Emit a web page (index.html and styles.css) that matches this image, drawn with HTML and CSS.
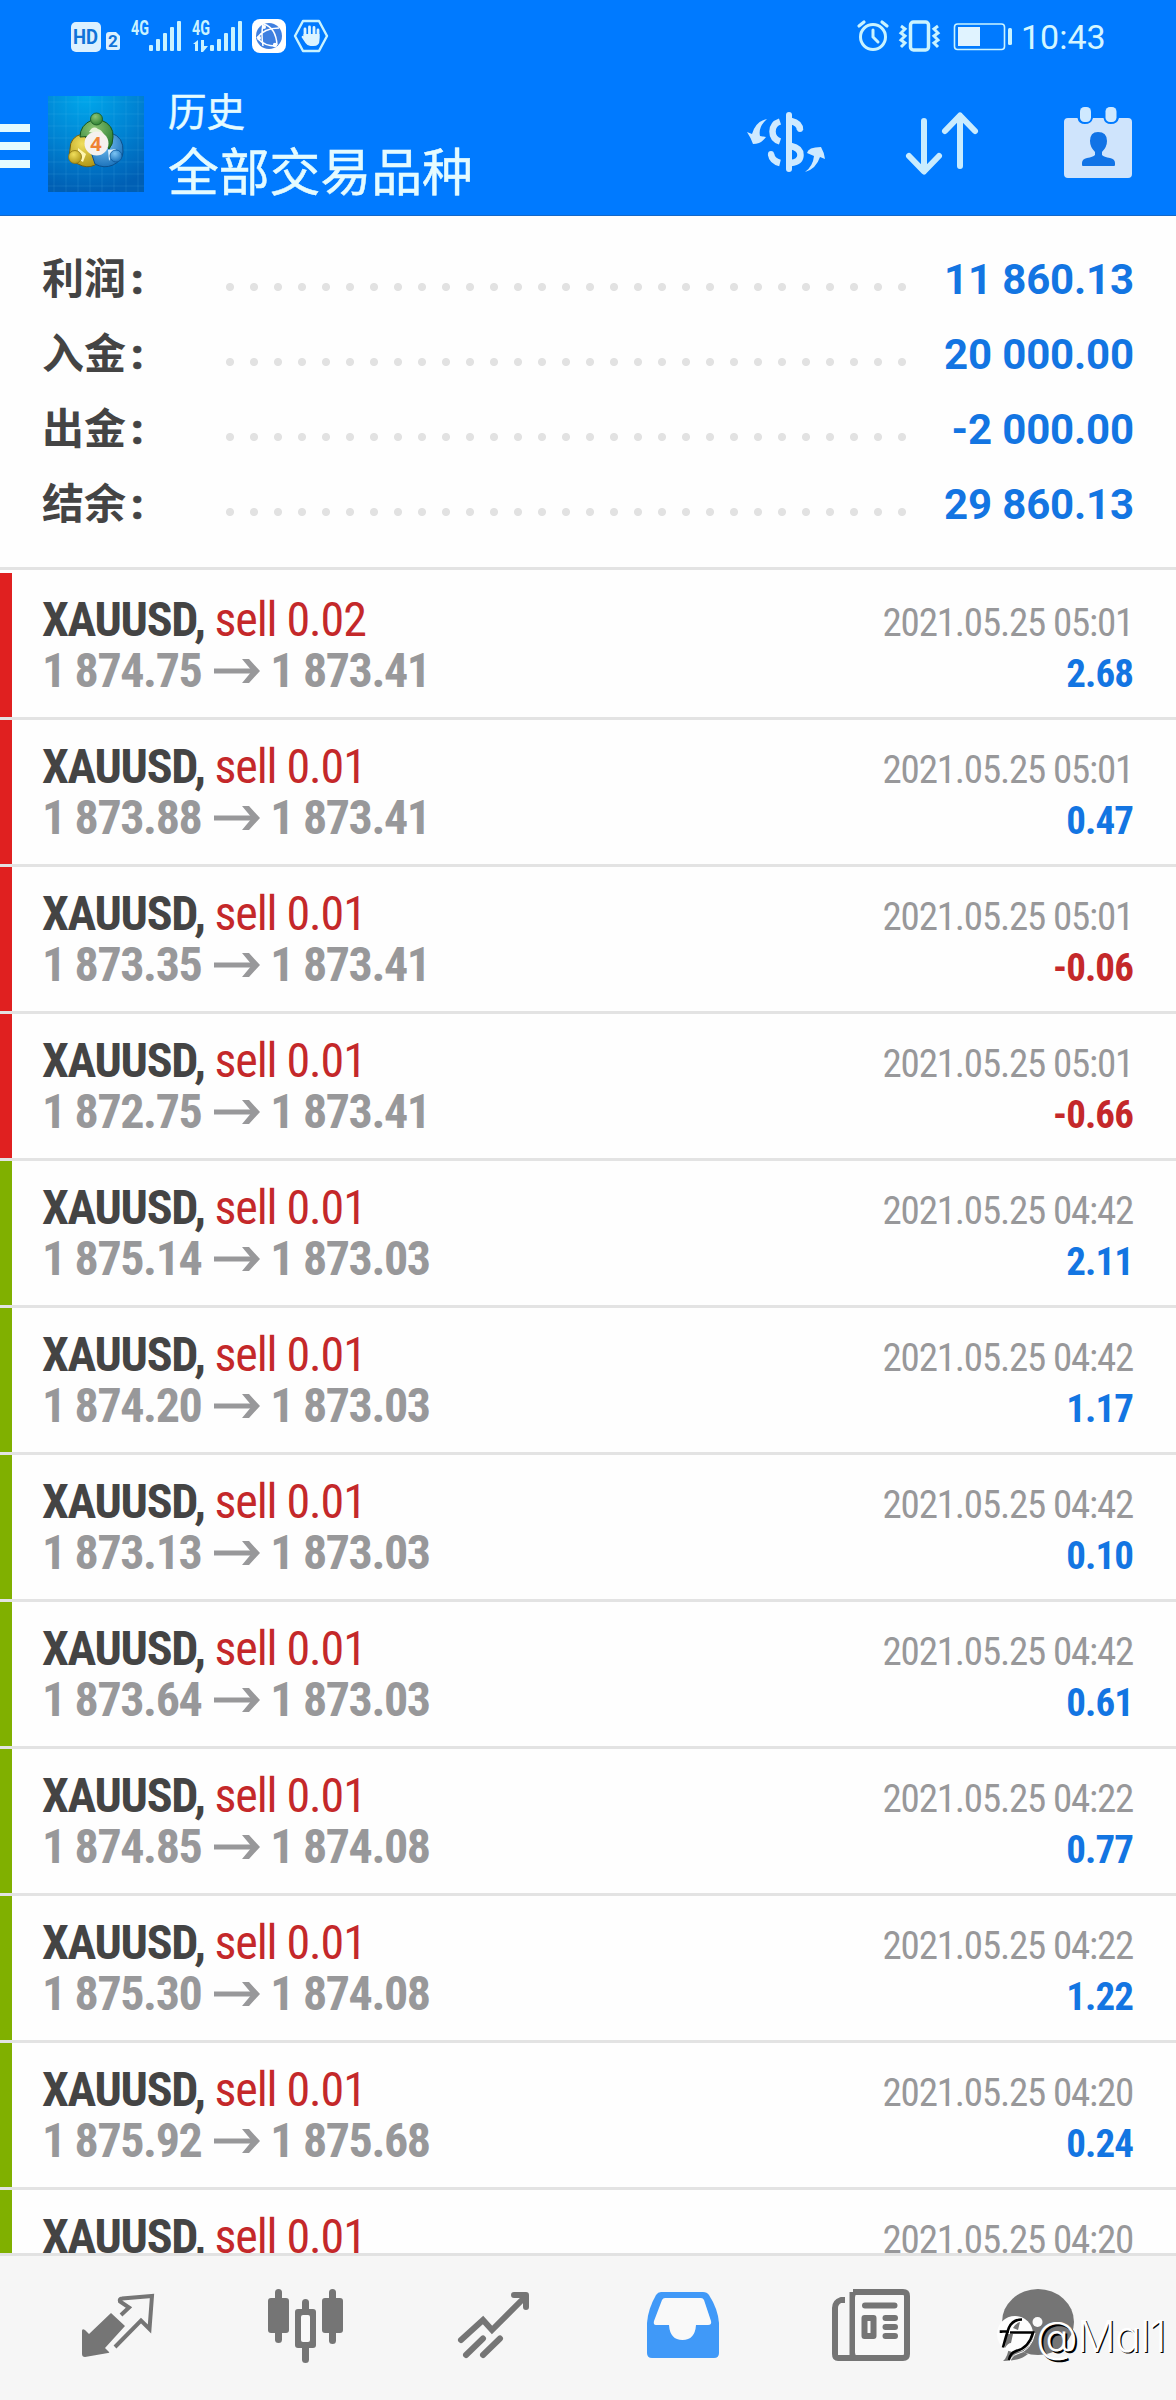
FILE: index.html
```html
<!DOCTYPE html>
<html lang="zh-CN">
<head>
<meta charset="utf-8">
<title>历史</title>
<link rel="stylesheet" href="styles.css">
</head>
<body>
<svg class="defs" width="0" height="0" aria-hidden="true">
  <symbol id="arrow" viewBox="0 0 46 26">
    <path d="M0 13H41" fill="none" stroke="currentColor" stroke-width="5"/>
    <path d="M28 1h7l11 12-11 12h-7l10-12z" fill="currentColor"/>
  </symbol>
</svg>

<header class="top">
  <div class="status">
    <svg width="280" height="72" viewBox="60 0 280 72">
      <rect x="71" y="22" width="30" height="30" rx="5" fill="#dcf1ff"/>
      <text x="73" y="44" class="hd" textLength="25" lengthAdjust="spacingAndGlyphs">HD</text>
      <path d="M109 32h7l4 4v12q0 2-2 2h-10q-2 0-2-2V35q0-3 3-3z" fill="#dcf1ff"/>
      <text x="108" y="47" class="sim">2</text>
      <g fill="#c9f3ff">
        <text x="131" y="35" class="gen" textLength="18" lengthAdjust="spacingAndGlyphs">4G</text>
        <rect x="149" y="45" width="4" height="6" rx="1"/><rect x="156" y="39" width="4" height="12" rx="1"/><rect x="163" y="33" width="4" height="18" rx="1"/><rect x="170" y="27" width="4" height="24" rx="1"/><rect x="177" y="21" width="4" height="30" rx="1"/>
        <text x="192" y="35" class="gen" textLength="18" lengthAdjust="spacingAndGlyphs">4G</text>
        <path d="M193 44l5-4v11h-3v-7zM201 40h3v6h4l-5 6h-2z"/>
        <rect x="210" y="45" width="4" height="6" rx="1"/><rect x="217" y="39" width="4" height="12" rx="1"/><rect x="224" y="33" width="4" height="18" rx="1"/><rect x="231" y="27" width="4" height="24" rx="1"/><rect x="238" y="21" width="4" height="30" rx="1"/>
      </g>
      <rect x="252" y="19" width="34" height="34" rx="8" fill="#fff"/>
      <circle cx="269" cy="36" r="13" fill="#3f7fe0"/>
      <path d="M264 24q12 4 13 21M257 38q7-10 22-10M258 39q7 7 17 7M263 24q-2 10 0 22" fill="none" stroke="#fff" stroke-width="1.5"/>
      <circle cx="264" cy="27" r="2" fill="#fff"/><circle cx="259" cy="38" r="2" fill="#fff"/><circle cx="275" cy="45" r="2.2" fill="#fff"/>
      <path d="M303 21h16l8 15-8 15h-16l-8-15z" fill="none" stroke="#c9f3ff" stroke-width="2.4" stroke-linejoin="round"/>
      <path d="M305 37V29M309.500 36V27M314 36V27.500M318 38V30" stroke="#dcf4ff" stroke-width="2.800" stroke-linecap="round"/>
      <path d="M303.500 34h16v6q0 6-6 6h-3q-3 0-5-3l-4-6q1-2 2-.5z" fill="#dcf4ff"/>
    </svg>
    <div class="status-right">
      <svg width="160" height="72" viewBox="855 0 160 72" fill="none" stroke="#c9f3ff">
        <circle cx="873" cy="37" r="12.500" stroke-width="3"/>
        <path d="M873 30v7l5 5" stroke-width="3" stroke-linecap="round"/>
        <path d="M859 26l5-4M887 26l-5-4" stroke-width="3.200" stroke-linecap="round"/>
        <rect x="910.500" y="22" width="18" height="28" rx="3" stroke-width="3.500"/>
        <path d="M901 26l4 3-4 4 4 3-4 4 4 3-4 4M938 26l-4 3 4 4-4 3 4 4-4 3 4 4" stroke-width="3"/>
        <rect x="954.500" y="24" width="50" height="25.500" rx="3" stroke-width="1.600"/>
        <rect x="958" y="27" width="22" height="19" fill="#e0f3ff" stroke="none"/>
        <rect x="1008" y="28" width="4" height="17" rx="1.500" fill="#c9f3ff" stroke="none"/>
      </svg>
      <span class="clock">10:43</span>
    </div>
  </div>
  <div class="bar">
    <div class="burger"><i></i><i></i><i></i></div>
    <svg class="logo" width="96" height="96" viewBox="48 96 96 96">
      <defs>
        <radialGradient id="bg" cx=".4" cy="0" r="1"><stop offset="0" stop-color="#00a8ec"/><stop offset=".55" stop-color="#0082d2"/><stop offset="1" stop-color="#005fb4"/></radialGradient>
        <radialGradient id="g" cx=".4" cy=".3" r=".8"><stop offset="0" stop-color="#8cc474"/><stop offset="1" stop-color="#237a2c"/></radialGradient>
        <radialGradient id="y" cx=".4" cy=".3" r=".8"><stop offset="0" stop-color="#f0de5c"/><stop offset="1" stop-color="#a98f10"/></radialGradient>
        <radialGradient id="b" cx=".4" cy=".3" r=".8"><stop offset="0" stop-color="#7cc4f4"/><stop offset="1" stop-color="#0f68b4"/></radialGradient>
        <pattern id="grid" x="48" y="96" width="12" height="12" patternUnits="userSpaceOnUse"><path d="M6 0V12M0 6H12" stroke="#5cc8f5" stroke-opacity=".14" stroke-width="1"/></pattern>
      </defs>
      <path fill="url(#bg)" d="M48 96h96v96H48z"/>
      <path fill="url(#grid)" d="M48 96h96v96H48z"/>
      <path d="M82 134q-12 3-12 15-3 10 8 15 9 5 17 1 6-4 6-12z" fill="url(#y)" stroke="#715f11"/>
      <path d="M111 133q13 4 12 19 0 8-10 13-9 4-18-1l-4-12z" fill="url(#b)" stroke="#0b508d"/>
      <path d="M80 137q0-12 12-17h9q13 5 12 17 0 8-4 12l-12-13z" fill="url(#g)" stroke="#17551f"/>
      <path d="M89 132q4-7 9-3 4 1 6 6z" fill="#e8f4d8"/>
      <circle cx="96.500" cy="119" r="6" fill="url(#g)" stroke="#17551f" stroke-width=".8"/>
      <path d="M78 148l8 6-3 8-5-3z" fill="#fff6b0"/>
      <circle cx="75" cy="157" r="6.500" fill="url(#y)" stroke="#8a7412" stroke-width=".8"/>
      <path d="M108 150l8-1-7 12z" fill="#d8efff"/>
      <circle cx="116" cy="156" r="6" fill="url(#b)" stroke="#0d5799" stroke-width=".8"/>
      <circle cx="96.500" cy="143.500" r="12" fill="#f5f1ee"/>
      <text x="96" y="151" class="four">4</text>
    </svg>
    <div class="titles">
      <div class="t1">历史</div>
      <div class="t2">全部交易品种</div>
    </div>
    <div class="actions">
      <svg width="156" height="100" viewBox="709 94 156 100" fill="#cfeaff">
        <g fill="none" stroke="#cfeaff" stroke-width="6">
          <path d="M789 115v54" stroke-linecap="round"/>
          <path d="M780 121.500q-7.500 2.500-7.500 10t7.500 10" stroke-width="6.500"/>
          <path d="M771 154q1 7 9 9" stroke-width="6.500"/>
          <path d="M791 121q9 2 9 9M791 146q9.500 2 9.500 9t-9.500 8" stroke-width="6.500"/>
          <path d="M771 154v.1M800 129v.1" stroke-linecap="round"/>
        </g>
        <path d="M767 119q-9 8-7 17l6 1q-5 7-13 7-2-6-6-12l5 2q4-13 15-15z"/>
        <path d="M805 172q8-6 9-16l-7-3q1-6 14-6 3 5 4 12l-5-2q-4 12-15 15z"/>
      </svg>
      <svg width="156" height="100" viewBox="865 94 156 100" fill="none" stroke="#c9ecff" stroke-width="6" stroke-linecap="round" stroke-linejoin="round">
        <path d="M924 121v50M909 156l15 15.500 15-15.500M960 166v-50M945 131l15-15.500 15 15.500"/>
      </svg>
      <svg width="155" height="100" viewBox="1021 94 155 100">
        <path d="M1068 118h9.500q1 6 7.500 6t8-6h10.500q1 6 7.500 6t8-6h9q4 0 4 4v52q0 4-4 4h-60q-4 0-4-4v-52q0-4 4-4z" fill="#cfe4fc"/>
        <rect x="1080" y="107" width="11" height="15" rx="4.500" fill="#cfe9ff"/>
        <rect x="1105.500" y="107" width="11" height="15" rx="4.500" fill="#cfe9ff"/>
        <path d="M1098 132q9 0 9 9 0 6-5 11v3q2 2 8 3 5 1 5 5v2q0 1-1 1h-31q-1 0-1-1v-2q0-4 5-5 6-1 8-3v-3q-5-5-5-11 0-9 8-9z" fill="#1173e6"/>
      </svg>
    </div>
  </div>
</header>

<section class="summary">
  <div class="sum"><span class="label">利润<b>:</b></span><span class="dots"></span><span class="val">11 860.13</span></div>
  <div class="sum"><span class="label">入金<b>:</b></span><span class="dots"></span><span class="val">20 000.00</span></div>
  <div class="sum"><span class="label">出金<b>:</b></span><span class="dots"></span><span class="val">-2 000.00</span></div>
  <div class="sum"><span class="label">结余<b>:</b></span><span class="dots"></span><span class="val">29 860.13</span></div>
</section>

<main class="list">
  <div class="row red"><div class="left"><div><b>XAUUSD,</b> <span class="sell">sell 0.02</span></div><div class="price">1 874.75<svg><use href="#arrow"/></svg>1 873.41</div></div><div class="right"><div class="date">2021.05.25 05:01</div><div class="pl">2.68</div></div></div>
  <div class="row red"><div class="left"><div><b>XAUUSD,</b> <span class="sell">sell 0.01</span></div><div class="price">1 873.88<svg><use href="#arrow"/></svg>1 873.41</div></div><div class="right"><div class="date">2021.05.25 05:01</div><div class="pl">0.47</div></div></div>
  <div class="row red"><div class="left"><div><b>XAUUSD,</b> <span class="sell">sell 0.01</span></div><div class="price">1 873.35<svg><use href="#arrow"/></svg>1 873.41</div></div><div class="right"><div class="date">2021.05.25 05:01</div><div class="pl loss">-0.06</div></div></div>
  <div class="row red"><div class="left"><div><b>XAUUSD,</b> <span class="sell">sell 0.01</span></div><div class="price">1 872.75<svg><use href="#arrow"/></svg>1 873.41</div></div><div class="right"><div class="date">2021.05.25 05:01</div><div class="pl loss">-0.66</div></div></div>
  <div class="row"><div class="left"><div><b>XAUUSD,</b> <span class="sell">sell 0.01</span></div><div class="price">1 875.14<svg><use href="#arrow"/></svg>1 873.03</div></div><div class="right"><div class="date">2021.05.25 04:42</div><div class="pl">2.11</div></div></div>
  <div class="row"><div class="left"><div><b>XAUUSD,</b> <span class="sell">sell 0.01</span></div><div class="price">1 874.20<svg><use href="#arrow"/></svg>1 873.03</div></div><div class="right"><div class="date">2021.05.25 04:42</div><div class="pl">1.17</div></div></div>
  <div class="row"><div class="left"><div><b>XAUUSD,</b> <span class="sell">sell 0.01</span></div><div class="price">1 873.13<svg><use href="#arrow"/></svg>1 873.03</div></div><div class="right"><div class="date">2021.05.25 04:42</div><div class="pl">0.10</div></div></div>
  <div class="row"><div class="left"><div><b>XAUUSD,</b> <span class="sell">sell 0.01</span></div><div class="price">1 873.64<svg><use href="#arrow"/></svg>1 873.03</div></div><div class="right"><div class="date">2021.05.25 04:42</div><div class="pl">0.61</div></div></div>
  <div class="row"><div class="left"><div><b>XAUUSD,</b> <span class="sell">sell 0.01</span></div><div class="price">1 874.85<svg><use href="#arrow"/></svg>1 874.08</div></div><div class="right"><div class="date">2021.05.25 04:22</div><div class="pl">0.77</div></div></div>
  <div class="row"><div class="left"><div><b>XAUUSD,</b> <span class="sell">sell 0.01</span></div><div class="price">1 875.30<svg><use href="#arrow"/></svg>1 874.08</div></div><div class="right"><div class="date">2021.05.25 04:22</div><div class="pl">1.22</div></div></div>
  <div class="row"><div class="left"><div><b>XAUUSD,</b> <span class="sell">sell 0.01</span></div><div class="price">1 875.92<svg><use href="#arrow"/></svg>1 875.68</div></div><div class="right"><div class="date">2021.05.25 04:20</div><div class="pl">0.24</div></div></div>
  <div class="row last"><div class="left"><div><b>XAUUSD,</b> <span class="sell">sell 0.01</span></div></div><div class="right"><div class="date">2021.05.25 04:20</div></div></div>
</main>

<nav class="nav">
  <svg viewBox="24 2256 188 144" fill="#757575">
    <path d="M111 2313l14 13-20 22 4 4q1 1-1 1l-23 4q-3 0-3-3v-23q0-3 3-1l4 4z"/>
    <path d="M121 2315l8-7.500-9-6q-1-3 2-3l30-2.500-2.500 33-8.500-8.500-26 26.500" fill="none" stroke="#757575" stroke-width="4"/>
  </svg>
  <svg viewBox="212 2256 188 144" fill="#757575">
    <rect x="268" y="2298" width="21" height="35" rx="3"/><rect x="275" y="2289" width="7" height="54" rx="3.500"/>
    <rect x="322" y="2298" width="21" height="35" rx="3"/><rect x="329" y="2289" width="7" height="55" rx="3.500"/>
    <rect x="302" y="2299" width="7" height="64" rx="3.500"/><rect x="295" y="2309" width="21" height="39" rx="3"/>
    <rect x="301" y="2315" width="9" height="27" rx="2" fill="#f9f9f9"/>
  </svg>
  <svg viewBox="400 2256 188 144" fill="none" stroke="#757575" stroke-width="6" stroke-linecap="round">
    <path d="M461 2340l22-20 9 10 33-33M466 2355l17-16.500M483 2355l17-16.500"/>
    <path d="M514 2295h12v12" stroke-linejoin="round"/>
  </svg>
  <svg viewBox="588 2256 188 144">
    <path fill="#4099f8" d="M661 2292h42q4 0 6 3 9 14 10 28v30q0 5-5 5h-62q-5 0-5-5v-30q1-14 9-28 2-3 5-3z"/>
    <path fill="#f9f9f9" d="M665 2298q-2 0-3 2l-8 21q-1 4 2 4h13q1 15 13.500 15t13.500-15h12q4 0 3-4l-7-21q-1-2-3-2z"/>
  </svg>
  <svg viewBox="776 2256 188 144" fill="none" stroke="#757575">
    <path d="M853 2292h50q4 0 4 4v58q0 4-4 4h-65q-3 0-3-4v-46q0-6 6-8h4M852.500 2292v65" stroke-width="6" stroke-linejoin="round"/>
    <rect x="855" y="2295" width="48.500" height="60" rx="3" fill="#f9f9f9" stroke="none"/>
    <path d="M865 2305.500h29.500M885.500 2318h9.500M885.500 2327h9.500M885.500 2336h9.500" stroke-width="6" stroke-linecap="round"/>
    <rect x="864.500" y="2318" width="9" height="18" stroke-width="6" stroke-linejoin="round"/>
  </svg>
  <svg viewBox="964 2256 188 144">
    <ellipse cx="1038" cy="2322" rx="36" ry="33" fill="#757575"/>
    <path d="M1003 2361q5-4 6-15l19 8q-8 7-25 7z" fill="#757575"/>
    <circle cx="1037.500" cy="2322" r="5" fill="#f9f9f9"/>
    <ellipse cx="1015" cy="2334" rx="18" ry="18" fill="#fdfdfd"/>
    <path d="M1006 2334h7l-2 9q-3 0-6 5zM1013 2328q3-5 7-6l-2 8z" fill="#757575"/>
    <path d="M1022 2319.500q-9 0-13 8-2 5-6 20M1001 2333v-1.500h8M1010 2332.500h23q-4 15.500-17 18.500-6 2-7 9" fill="none" stroke="#000" stroke-width="2.600"/>
    <path d="M1035 2333q-4 18-18 21-6 2-7 8" fill="none" stroke="#fff" stroke-width="1"/>
  </svg>
</nav>
<div class="mark"><span class="at">@</span>Mal1</div>
</body>
</html>
```
FILE: styles.css
```css
* { box-sizing: border-box; }
body {
  margin: 0;
  width: 1176px;
  height: 2400px;
  display: flex;
  flex-direction: column;
  position: relative;
  overflow: hidden;
  background: #fefefe;
  font-family: Roboto, "Noto Sans CJK SC", sans-serif;
}
svg { display: block; flex: none; }
.defs { position: absolute; }

.top { height: 216px; background: #007aff; border-bottom: 1px solid #1468c8; color: #e4fbff; }
.status { height: 72px; padding-left: 60px; padding-right: 72px; display: flex; justify-content: space-between; }
.status-right { display: flex; }
.clock { width: 89px; padding-left: 6px; font-size: 34px; line-height: 75px; color: #d4f6ff; }
.hd { font: bold 20px Roboto, sans-serif; fill: #1173d8; }
.sim { font: bold 17px Roboto, sans-serif; fill: #1173d8; }
.gen { font: bold 20px Roboto, sans-serif; }
.four { font: bold 20px "Open Sans", sans-serif; fill: #ef8234; text-anchor: middle; }

.bar { height: 143px; display: flex; align-items: flex-start; }
.burger { width: 48px; padding-top: 52px; display: flex; flex-direction: column; gap: 10px; }
.burger i { width: 30px; height: 8px; background: #e4fbff; }
.logo { margin-top: 24px; }
.titles { padding: 8px 0 0 24px; font-family: "Noto Sans CJK SC", sans-serif; white-space: nowrap; -webkit-text-stroke: .5px #e4fbff; }
.t1 { font-size: 38.5px; line-height: 58px; }
.t2 { font-size: 50.8px; line-height: 62px; }
.actions { margin-left: auto; padding-top: 22px; display: flex; }

.summary { height: 354px; padding: 26px 42px 0; border-bottom: 3px solid #e3e3e3; }
.sum { height: 75px; display: flex; align-items: baseline; line-height: 75px; font-size: 42px; font-weight: bold; }
.label { width: 176px; color: #444; font-family: "Noto Sans CJK SC", sans-serif; line-height: 60px; }
.label b { font-family: Roboto, sans-serif; margin-left: 5px; -webkit-text-stroke: .6px #444; }
.dots {
  width: 696px;
  height: 75px;
  align-self: flex-start;
  background: radial-gradient(circle 4.500px at 12px 45px, #e2e2e2 80%, transparent 100%) 0 0 / 24px 75px;
}
.val { margin-left: auto; letter-spacing: -.15px; color: #1375e2; }

.list { height: 1683px; padding-top: 3px; overflow: hidden; font-stretch: 75%; font-family: "Roboto Condensed", Roboto, sans-serif; }
.row {
  height: 147px;
  padding-right: 43px;
  display: flex;
  justify-content: space-between;
  border-bottom: 3px solid #e3e3e3;
  line-height: 51px;
  white-space: nowrap;
}
.row::before { content: ""; width: 12px; background: #80b000; }
.row.red::before { background: #e02020; }
.left { flex: 1; padding: 21px 0 0 30px; font-size: 48px; letter-spacing: -1.300px; color: #444; }
.sell { letter-spacing: -1.1px; color: #c4282a; }
.price { display: flex; align-items: center; font-weight: bold; letter-spacing: -1.400px; color: #98989a; }
.price svg { width: 46px; height: 26px; margin: 0 10px 0 13px; }
.right { padding-top: 25px; font-size: 39px; text-align: right; }
.date { letter-spacing: -1.200px; color: #98989a; }
.pl { font-weight: bold; letter-spacing: -.9px; color: #1375e2; }
.loss { color: #c4282a; }
.last { border: 0; }

.nav { flex: none; height: 147px; padding-left: 24px; display: grid; grid-template-columns: repeat(6, 188px); border-top: 3px solid #e2e2e2; background: #f6f6f6; }
.nav svg { width: 188px; height: 144px; }
.mark {
  position: absolute;
  left: 1036px;
  top: 2306px;
  font: 300 43px/60px Inter, "Open Sans", sans-serif;
  letter-spacing: -.7px;
  font-feature-settings: "cv11";
  color: #fff;
  text-shadow: 1.200px 1px 0 #000;
}
.at { text-shadow: 2px 2px 0 #000; }
```
